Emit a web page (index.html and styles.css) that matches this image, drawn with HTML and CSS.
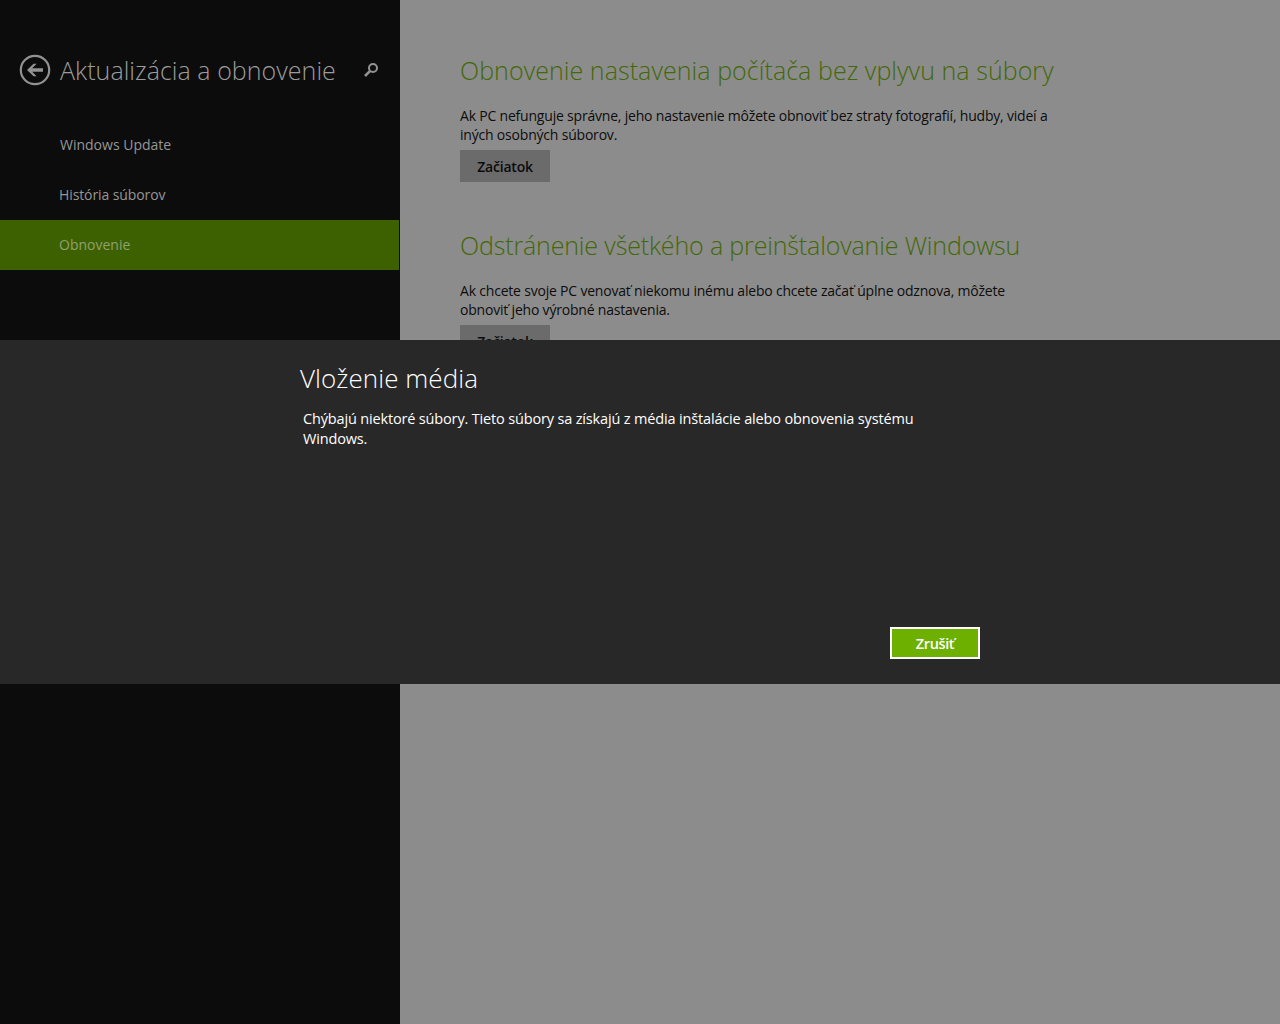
FILE: index.html
```html
<!DOCTYPE html>
<html lang="sk">
<head>
<meta charset="utf-8">
<title>Aktualizácia a obnovenie</title>
<link rel="stylesheet" href="styles.css">
</head>
<body>
<div class="screen">
  <aside class="sidebar">
    <header class="side-head">
      <svg class="back" width="32" height="32" viewBox="0 0 32 32" aria-hidden="true">
        <circle cx="16" cy="16" r="14.2" fill="none" stroke="#929292" stroke-width="2.2"/>
        <path d="M8 16 L14.5 9.8 H17.6 L13.2 14.2 H24 V17.8 H13.2 L17.6 22.2 H14.5 Z" fill="#929292"/>
      </svg>
      <h1 class="side-title">Aktualizácia a obnovenie</h1>
      <svg class="search" width="16" height="16" viewBox="0 0 16 16" aria-hidden="true">
        <circle cx="10" cy="6" r="4" fill="none" stroke="#929292" stroke-width="2"/>
        <path d="M7.2 8.8 L2 14" stroke="#929292" stroke-width="2.6" fill="none"/>
      </svg>
    </header>
    <nav class="nav">
      <div class="nav-item nav-first">Windows Update</div>
      <div class="nav-item nav-tight">História súborov</div>
      <div class="nav-item nav-active">Obnovenie</div>
    </nav>
  </aside>
  <main class="content">
    <section class="block">
      <h2 class="block-title">Obnovenie nastavenia počítača bez vplyvu na súbory</h2>
      <p class="block-text">Ak PC nefunguje správne, jeho nastavenie môžete obnoviť bez straty fotografií, hudby, videí a<br>iných osobných súborov.</p>
      <div class="btn">Začiatok</div>
    </section>
    <section class="block">
      <h2 class="block-title block-title-tight">Odstránenie všetkého a preinštalovanie Windowsu</h2>
      <p class="block-text">Ak chcete svoje PC venovať niekomu inému alebo chcete začať úplne odznova, môžete<br>obnoviť jeho výrobné nastavenia.</p>
      <div class="btn">Začiatok</div>
    </section>
  </main>
  <div class="dialog">
    <div class="dialog-inner">
      <h2 class="dialog-title">Vloženie média</h2>
      <p class="dialog-text">Chýbajú niektoré súbory. Tieto súbory sa získajú z média inštalácie alebo obnovenia systému<br>Windows.</p>
      <div class="dialog-actions"><div class="cancel">Zrušiť</div></div>
    </div>
  </div>
</div>
</body>
</html>
```
FILE: styles.css
```css
* { box-sizing: border-box; }
html, body { margin: 0; padding: 0; }
body { font-family: "Open Sans", "Noto Sans", sans-serif; }
.screen { position: relative; display: flex; width: 1280px; height: 1024px; overflow: hidden; background: #8c8c8c; }
.sidebar { width: 400px; flex: none; background: #0c0c0c; padding-top: 54px; }
.side-head { display: flex; align-items: center; height: 32px; padding-left: 19px; }
.back { flex: none; }
.side-title { margin: 0 0 0 9px; font-size: 25px; font-weight: 300; line-height: 32px; letter-spacing: 0.04px; color: #9c9c9c; white-space: nowrap; width: 303px; }
.search { flex: none; }
.nav { margin-top: 34px; }
.nav-item { width: 399px; height: 50px; padding-left: 59px; line-height: 50px; font-size: 14px; color: #969696; }
.nav-first { padding-left: 60px; }
.nav-tight { letter-spacing: -0.1px; }
.nav-active { background: #3d6000; color: #8fa070; }
.content { flex: 1; padding: 50px 0 0 60px; }
.block { height: 175px; }
.block-title { margin: 0; font-size: 25px; font-weight: 300; line-height: 40px; letter-spacing: 0.06px; color: #426807; white-space: nowrap; }
.block-title-tight { letter-spacing: -0.15px; }
.block-text { margin: 16px 0 0; font-size: 14px; line-height: 19px; letter-spacing: -0.2px; color: #0d0d0d; white-space: nowrap; }
.btn { width: 90px; height: 32px; margin-top: 6px; background: #6b6b6b; color: #0b0b0b; font-size: 14px; font-weight: 600; line-height: 34px; letter-spacing: -0.2px; text-align: center; }
.dialog { position: absolute; left: 0; top: 340px; width: 1280px; height: 344px; background: #282828; }
.dialog-inner { width: 680px; height: 100%; margin-left: 300px; padding-top: 18px; }
.dialog-title { margin: 0; font-size: 26px; font-weight: 300; line-height: 40px; letter-spacing: 0.07px; color: #fff; }
.dialog-text { margin: 0; padding: 11px 0 0 3px; font-size: 14.5px; line-height: 20px; letter-spacing: -0.16px; color: #fff; white-space: nowrap; }
.dialog-actions { display: flex; justify-content: flex-end; margin-top: 178px; }
.cancel { width: 90px; height: 32px; border: 2px solid #fff; background: #6eb000; color: #fff; font-size: 14.5px; font-weight: 600; line-height: 30px; letter-spacing: -0.4px; text-align: center; }
```
